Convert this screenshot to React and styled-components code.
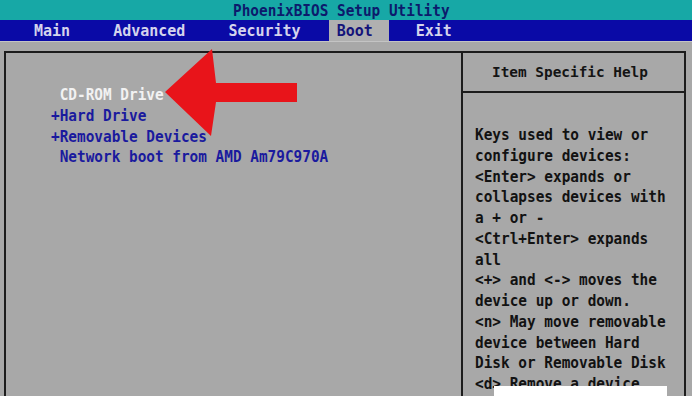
import React from 'react';
import styled, { createGlobalStyle } from 'styled-components';

const GlobalStyle = createGlobalStyle`
    html, body {
        margin: 0;
        padding: 0;
        background: #a8a8a8;
    }
`;

const menu = [
    { label: 'Main', offset: 34 },
    { label: 'Advanced', offset: 43 },
    { label: 'Security', offset: 43 },
    { label: 'Boot', offset: 36, active: true },
    { label: 'Exit', offset: 27 },
];

const bootItems = [
    { text: ' CD-ROM Drive', selected: true },
    { text: '+Hard Drive' },
    { text: '+Removable Devices' },
    { text: ' Network boot from AMD Am79C970A' },
];

const helpLines = [
    'Keys used to view or',
    'configure devices:',
    '<Enter> expands or',
    'collapses devices with',
    'a + or -',
    '<Ctrl+Enter> expands',
    'all',
    '<+> and <-> moves the',
    'device up or down.',
    '<n> May move removable',
    'device between Hard',
    'Disk or Removable Disk',
    '<d> Remove a device',
];

const App = () => {
    return (
        <Screen>
            <GlobalStyle />
            <TitleBar>
                <TitleText>PhoenixBIOS Setup Utility</TitleText>
            </TitleBar>
            <MenuBar>
                {menu.map(item => (
                    <MenuItem key={item.label} $offset={item.offset} $active={item.active}>
                        {item.label}
                    </MenuItem>
                ))}
            </MenuBar>
            <Body>
                <Frame>
                    <BootList>
                        {bootItems.map(item => (
                            <BootItem key={item.text} $selected={item.selected}>
                                {item.text}
                            </BootItem>
                        ))}
                    </BootList>
                    <HelpPanel>
                        <HelpTitle>Item Specific Help</HelpTitle>
                        <HelpText>
                            {helpLines.map(line => (
                                <HelpLine key={line}>{line}</HelpLine>
                            ))}
                        </HelpText>
                    </HelpPanel>
                </Frame>
            </Body>
            <Arrow viewBox='0 0 692 396'>
                <polygon points='165,92 212,49 216,83 297,83 297,102 216,102 211,136' fill='#e8141a' />
            </Arrow>
            <Stamp />
        </Screen>
    );
};

export default App;

const Screen = styled.div`
    position: relative;
    display: flex;
    flex-direction: column;

    width: 692px;
    height: 396px;
    overflow: hidden;

    background: #a8a8a8;
    font-family: 'DejaVu Sans Mono', 'Liberation Mono', monospace;
    font-weight: bold;
    font-size: 14.4px;
`;

const TitleBar = styled.div`
    display: flex;
    flex-shrink: 0;
    align-items: center;

    height: 20px;
    padding-left: 233px;

    background: #17a8a6;
`;

const TitleText = styled.span`
    display: inline-block;
    transform: scaleY(1.12);

    color: #0c1a6c;
    font-size: 14.4px;
`;

const MenuBar = styled.div`
    display: flex;
    flex-shrink: 0;
    align-items: stretch;

    height: 21px;

    background: #0a0aa6;
`;

const MenuItem = styled.div`
    display: flex;
    align-items: center;

    margin-left: ${props => (props.$active ? `${props.$offset - 8}px` : `${props.$offset}px`)};
    padding: ${props => (props.$active ? '0 16px 0 8px' : '0')};

    background: ${props => (props.$active ? '#b0b0b0' : 'transparent')};
    color: ${props => (props.$active ? '#14147a' : '#d4d4ec')};
    font-size: 15px;
`;

const Body = styled.div`
    display: flex;
    flex: 1;
    min-height: 0;

    padding: 9px 4px 0 4px;

    border-top: 1px solid #c4c4c4;
`;

const Frame = styled.div`
    display: grid;
    grid-template-columns: 455px 1fr;
    flex: 1;

    margin-right: 2px;

    border: 2px solid #1c1c1c;
    border-bottom: none;
`;

const BootList = styled.div`
    display: flex;
    flex-direction: column;

    padding: 31px 0 0 45px;
`;

const BootItem = styled.div`
    height: 20.75px;
    line-height: 20.75px;
    white-space: pre;
    transform: scaleY(1.12);

    color: ${props => (props.$selected ? '#f2f2f2' : '#1a1a9e')};
`;

const HelpPanel = styled.div`
    display: flex;
    flex-direction: column;

    border-left: 2px solid #1c1c1c;
`;

const HelpTitle = styled.div`
    display: flex;
    align-items: center;

    height: 38px;
    padding-left: 29px;

    border-bottom: 2px solid #1c1c1c;
    color: #141414;
`;

const HelpText = styled.div`
    display: flex;
    flex-direction: column;

    padding: 31px 0 0 12px;
`;

const HelpLine = styled.div`
    height: 20.75px;
    line-height: 20.75px;
    white-space: pre;
    transform: scaleY(1.12);

    color: #121212;
`;

const Arrow = styled.svg`
    position: absolute;
    top: 0;
    left: 0;

    width: 692px;
    height: 396px;
    pointer-events: none;
`;

const Stamp = styled.div`
    position: absolute;
    top: 386px;
    left: 494px;

    width: 173px;
    height: 10px;

    background: #ffffff;
`;
